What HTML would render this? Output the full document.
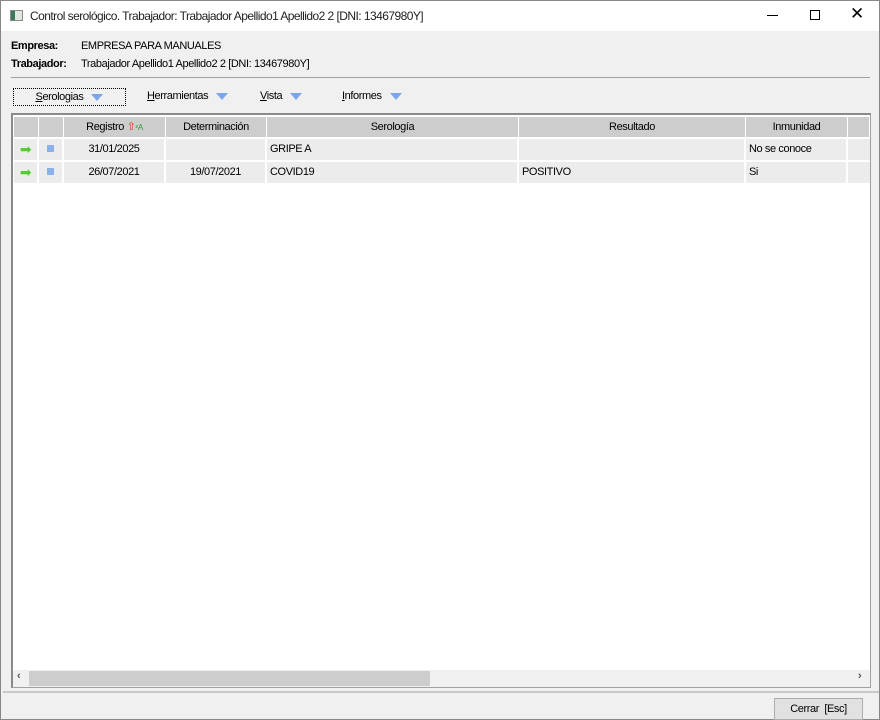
<!DOCTYPE html><html><head><style>
*{margin:0;padding:0;box-sizing:border-box}
body{width:880px;height:720px;background:#f0f0f0;font-family:"Liberation Sans",sans-serif;font-size:11px;letter-spacing:-0.4px;color:#000;position:relative;overflow:hidden;border:1px solid #888}
.a{position:absolute}
.t{top:0;left:0;width:878px;height:30px;background:#fff}
.hd{background:#cdcdcd;height:20px;top:116px;line-height:20px;text-align:center;border-right:1px solid #fff}
.c{line-height:21px;height:21px;background:#ececec;border-right:2px solid #fff;white-space:nowrap;overflow:hidden}
.tri{display:inline-block;width:0;height:0;border-left:6px solid transparent;border-right:6px solid transparent;border-top:7px solid #7aa6e8;margin-left:8px;vertical-align:middle}
</style></head><body>
<div class="a t"></div>
<div class="a" style="left:9px;top:9px;width:13px;height:11px;border:1px solid #888;background:#dfe8e0"><div style="width:4px;height:9px;background:#3a7a5a"></div></div>
<div class="a" style="left:29px;top:8px;font-size:12px;letter-spacing:-0.55px;color:#222">Control serológico. Trabajador: Trabajador Apellido1 Apellido2 2 [DNI: 13467980Y]</div>
<div class="a" style="left:766px;top:14px;width:11px;height:1px;background:#000"></div>
<div class="a" style="left:809px;top:9px;width:10px;height:10px;border:1px solid #000"></div>
<div class="a" style="left:849px;top:3px;font-size:17px">✕</div>
<div class="a" style="left:10px;top:39px;font-weight:bold">Empresa:</div>
<div class="a" style="left:80px;top:39px">EMPRESA PARA MANUALES</div>
<div class="a" style="left:10px;top:57px;font-weight:bold">Trabajador:</div>
<div class="a" style="left:80px;top:57px">Trabajador Apellido1 Apellido2 2 [DNI: 13467980Y]</div>
<div class="a" style="left:10px;top:76px;width:859px;height:1px;background:#a0a0a0"></div>
<div class="a" style="left:12px;top:87px;width:113px;height:18px;border:1px dotted #000;text-align:center;line-height:16px"><u>S</u>erologias<span class="tri"></span></div>
<div class="a" style="left:146px;top:89px"><u>H</u>erramientas<span class="tri"></span></div>
<div class="a" style="left:259px;top:89px"><u>V</u>ista<span class="tri"></span></div>
<div class="a" style="left:341px;top:89px"><u>I</u>nformes<span class="tri"></span></div>
<div class="a" style="left:10px;top:112px;width:860px;height:575px;background:#fff;border:1px solid #a0a0a0;border-left:2px solid #8a8a8a;border-top:2px solid #8a8a8a"></div>
<div class="a hd" style="left:13px;width:25px"></div>
<div class="a hd" style="left:38px;width:25px"></div>
<div class="a hd" style="left:63px;width:102px">Registro <span style="color:#e03020">⇧</span><span style="color:#2a9a3a;font-size:8px">ᶻA</span></div>
<div class="a hd" style="left:165px;width:101px">Determinación</div>
<div class="a hd" style="left:266px;width:252px">Serología</div>
<div class="a hd" style="left:518px;width:227px">Resultado</div>
<div class="a hd" style="left:745px;width:102px">Inmunidad</div>
<div class="a hd" style="left:847px;width:22px"></div>
<div class="a" style="left:13px;top:138px;width:856px;height:46px">
<div class="a c" style="left:0;top:0;width:25px;color:#5c3;font-size:14px;text-align:center">➡</div>
<div class="a c" style="left:25px;top:0;width:25px;text-align:center"><span style="display:inline-block;width:7px;height:7px;background:#8cb0ea"></span></div>
<div class="a c" style="left:50px;top:0;width:102px;text-align:center">31/01/2025</div>
<div class="a c" style="left:152px;top:0;width:101px"></div>
<div class="a c" style="left:253px;top:0;width:252px;padding-left:3px">GRIPE A</div>
<div class="a c" style="left:505px;top:0;width:227px"></div>
<div class="a c" style="left:732px;top:0;width:102px;padding-left:3px">No se conoce</div>
<div class="a c" style="left:834px;top:0;width:22px;border:0"></div>
<div class="a c" style="left:0;top:23px;width:25px;color:#5c3;font-size:14px;text-align:center">➡</div>
<div class="a c" style="left:25px;top:23px;width:25px;text-align:center"><span style="display:inline-block;width:7px;height:7px;background:#8cb0ea"></span></div>
<div class="a c" style="left:50px;top:23px;width:102px;text-align:center">26/07/2021</div>
<div class="a c" style="left:152px;top:23px;width:101px;text-align:center">19/07/2021</div>
<div class="a c" style="left:253px;top:23px;width:252px;padding-left:3px">COVID19</div>
<div class="a c" style="left:505px;top:23px;width:227px;padding-left:3px">POSITIVO</div>
<div class="a c" style="left:732px;top:23px;width:102px;padding-left:3px">Si</div>
<div class="a c" style="left:834px;top:23px;width:22px;border:0"></div>
</div>
<div class="a" style="left:12px;top:669px;width:857px;height:17px;background:#f0f0f0"></div>
<div class="a" style="left:28px;top:670px;width:401px;height:15px;background:#cdcdcd"></div>
<div class="a" style="left:16px;top:669px;font-weight:bold;color:#555">‹</div>
<div class="a" style="left:857px;top:669px;font-weight:bold;color:#555">›</div>
<div class="a" style="left:2px;top:690px;width:876px;height:2px;background:#c8c8c8"></div>
<div class="a" style="left:773px;top:697px;width:89px;height:22px;background:#e1e1e1;border:1px solid #adadad;text-align:center;line-height:20px">Cerrar &nbsp;[Esc]</div>
</body></html>
